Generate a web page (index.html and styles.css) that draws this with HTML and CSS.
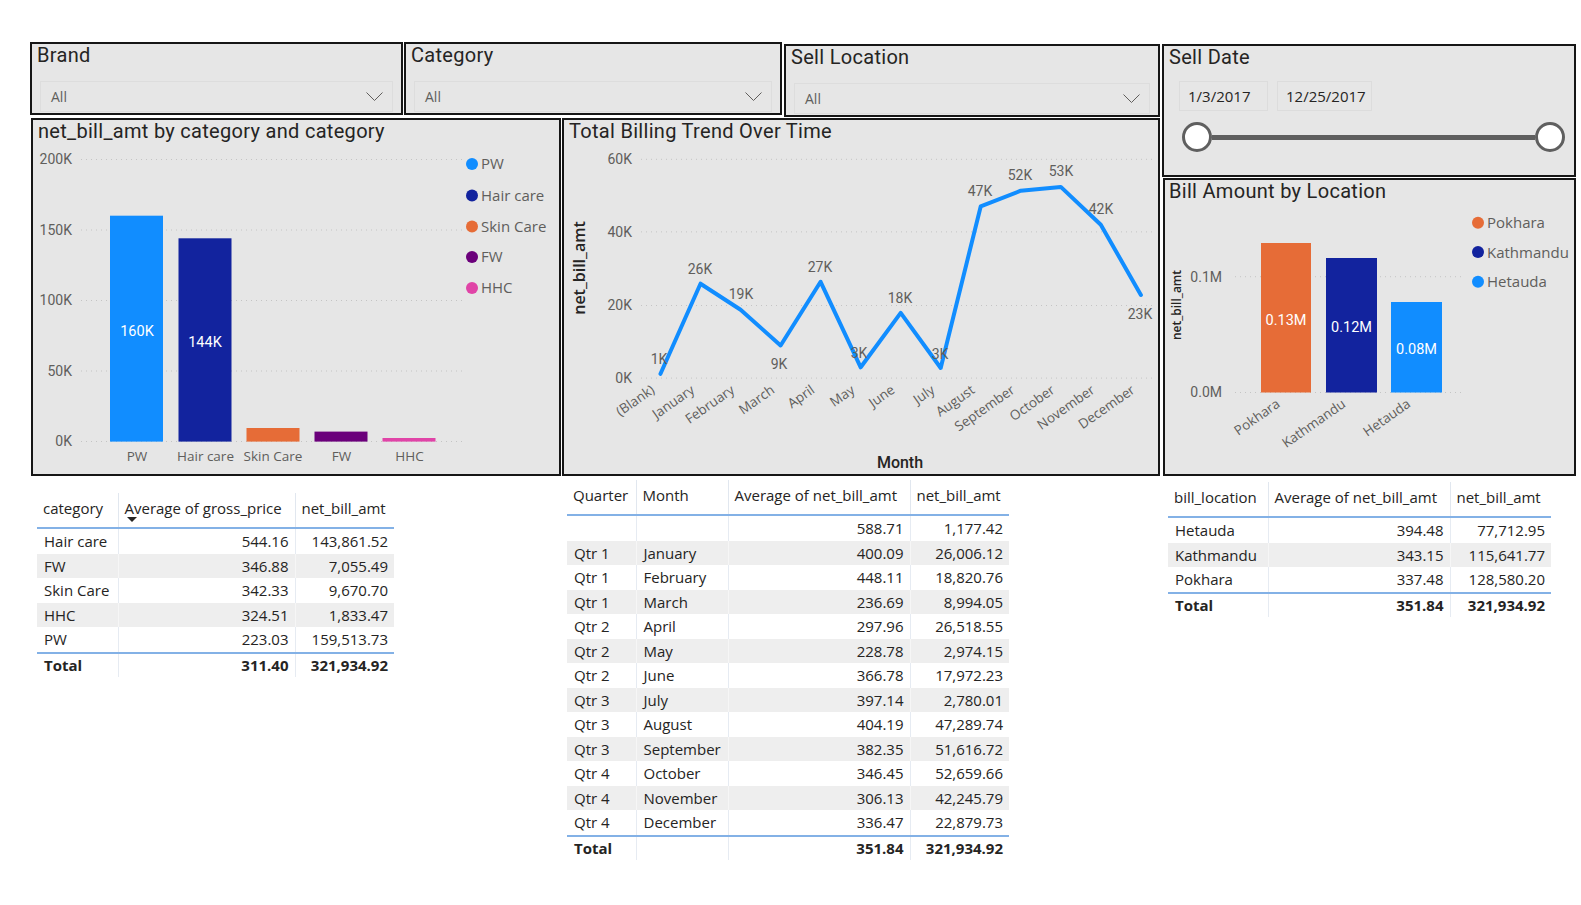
FILE: index.html
```html
<!DOCTYPE html>
<html>
<head>
<meta charset="utf-8">
<title>Billing Dashboard</title>
<link rel="stylesheet" href="styles.css">
</head>
<body>
<div class="board">
  <div class="main">
    <div class="slicers">
      <section class="panel slicer brand">
        <div class="ptitle">Brand</div>
        <div class="dropdown"><span>All</span><svg class="chev" width="17" height="9" viewBox="0 0 17 9"><polyline points="0.5,0.5 8.5,8.5 16.5,0.5"/></svg></div>
      </section>
      <section class="panel slicer category">
        <div class="ptitle">Category</div>
        <div class="dropdown"><span>All</span><svg class="chev" width="17" height="9" viewBox="0 0 17 9"><polyline points="0.5,0.5 8.5,8.5 16.5,0.5"/></svg></div>
      </section>
      <section class="panel slicer sell-location">
        <div class="ptitle">Sell Location</div>
        <div class="dropdown"><span>All</span><svg class="chev" width="17" height="9" viewBox="0 0 17 9"><polyline points="0.5,0.5 8.5,8.5 16.5,0.5"/></svg></div>
      </section>
    </div>
    <div class="charts">
      <section class="panel bar-panel">
        <div class="ptitle">net_bill_amt by category and category</div>
        <svg class="chart" width="526" height="332" viewBox="33 142 526 332">
          <g class="grid">
            <line x1="81" y1="159.5" x2="462" y2="159.5"/>
            <line x1="81" y1="230" x2="462" y2="230"/>
            <line x1="81" y1="300.5" x2="462" y2="300.5"/>
            <line x1="81" y1="371" x2="462" y2="371"/>
            <line x1="81" y1="441.5" x2="462" y2="441.5"/>
          </g>
          <g class="num" text-anchor="end">
            <text x="72" y="164">200K</text>
            <text x="72" y="234.5">150K</text>
            <text x="72" y="305">100K</text>
            <text x="72" y="375.5">50K</text>
            <text x="72" y="446">0K</text>
          </g>
          <rect x="110" y="215.7" width="53" height="225.9" fill="#118DFF"/>
          <rect x="178.5" y="238.3" width="53" height="203.3" fill="#12239E"/>
          <rect x="246.5" y="428" width="53" height="13.6" fill="#E66C37"/>
          <rect x="314.5" y="431.6" width="53" height="10" fill="#6B007B"/>
          <rect x="382.5" y="438" width="53" height="3.6" fill="#E044A7"/>
          <g class="inlabel" text-anchor="middle">
            <text x="137" y="336">160K</text>
            <text x="205" y="347">144K</text>
          </g>
          <g class="cat" text-anchor="middle">
            <text x="137" y="461">PW</text>
            <text x="205.5" y="461">Hair care</text>
            <text x="273" y="461">Skin Care</text>
            <text x="341.5" y="461">FW</text>
            <text x="409.5" y="461">HHC</text>
          </g>
          <g class="legend">
            <circle cx="472" cy="164" r="6" fill="#118DFF"/><text x="481" y="169">PW</text>
            <circle cx="472" cy="195.5" r="6" fill="#12239E"/><text x="481" y="200.5">Hair care</text>
            <circle cx="472" cy="226.5" r="6" fill="#E66C37"/><text x="481" y="231.5">Skin Care</text>
            <circle cx="472" cy="257" r="6" fill="#6B007B"/><text x="481" y="262">FW</text>
            <circle cx="472" cy="288" r="6" fill="#E044A7"/><text x="481" y="293">HHC</text>
          </g>
        </svg>
      </section>
      <section class="panel line-panel">
        <div class="ptitle">Total Billing Trend Over Time</div>
        <svg class="chart" width="594" height="332" viewBox="564 142 594 332">
          <g class="grid">
            <line x1="641" y1="159.3" x2="1156" y2="159.3"/>
            <line x1="641" y1="231.9" x2="1156" y2="231.9"/>
            <line x1="641" y1="305.5" x2="1156" y2="305.5"/>
            <line x1="641" y1="378.1" x2="1156" y2="378.1"/>
          </g>
          <g class="num" text-anchor="end">
            <text x="632" y="164">60K</text>
            <text x="632" y="236.5">40K</text>
            <text x="632" y="310">20K</text>
            <text x="632" y="382.5">0K</text>
          </g>
          <text class="axis-title" x="579" y="268" text-anchor="middle" transform="rotate(-90 579 268)" dy="0.35em">net_bill_amt</text>
          <polyline class="trend" points="660.5,373.8 700.5,283.7 740.6,309.8 780.6,345.5 820.6,281.8 860.7,367.3 900.7,312.9 940.7,368 980.7,206.4 1020.8,190.7 1060.8,186.9 1100.8,224.7 1140.9,295"/>
          <g class="num" text-anchor="middle">
            <text x="659" y="364">1K</text>
            <text x="700" y="274">26K</text>
            <text x="741" y="299">19K</text>
            <text x="779" y="369">9K</text>
            <text x="820" y="272">27K</text>
            <text x="859" y="358">3K</text>
            <text x="900" y="303">18K</text>
            <text x="940" y="359">3K</text>
            <text x="980" y="196">47K</text>
            <text x="1020" y="180">52K</text>
            <text x="1061" y="176">53K</text>
            <text x="1101" y="214">42K</text>
            <text x="1140" y="319">23K</text>
          </g>
          <g class="cat" text-anchor="end">
            <text x="655.5" y="392" transform="rotate(-35 655.5 392)">(Blank)</text>
            <text x="695.5" y="392" transform="rotate(-35 695.5 392)">January</text>
            <text x="735.6" y="392" transform="rotate(-35 735.6 392)">February</text>
            <text x="775.6" y="392" transform="rotate(-35 775.6 392)">March</text>
            <text x="815.6" y="392" transform="rotate(-35 815.6 392)">April</text>
            <text x="855.7" y="392" transform="rotate(-35 855.7 392)">May</text>
            <text x="895.7" y="392" transform="rotate(-35 895.7 392)">June</text>
            <text x="935.7" y="392" transform="rotate(-35 935.7 392)">July</text>
            <text x="975.7" y="392" transform="rotate(-35 975.7 392)">August</text>
            <text x="1015.8" y="392" transform="rotate(-35 1015.8 392)">September</text>
            <text x="1055.8" y="392" transform="rotate(-35 1055.8 392)">October</text>
            <text x="1095.8" y="392" transform="rotate(-35 1095.8 392)">November</text>
            <text x="1135.9" y="392" transform="rotate(-35 1135.9 392)">December</text>
          </g>
          <text class="axis-title month" x="900" y="468" text-anchor="middle">Month</text>
        </svg>
      </section>
    </div>
  </div>
  <div class="side">
    <section class="panel sell-date">
      <div class="ptitle">Sell Date</div>
      <div class="dates">
        <div class="datebox first">1/3/2017</div>
        <div class="datebox second">12/25/2017</div>
      </div>
      <div class="slider">
        <div class="knob"></div>
        <div class="track"></div>
        <div class="knob"></div>
      </div>
    </section>
    <section class="panel loc-panel">
      <div class="ptitle">Bill Amount by Location</div>
      <svg class="chart" width="409" height="272" viewBox="1165 202 409 272">
        <g class="grid">
          <line x1="1235" y1="276.7" x2="1465" y2="276.7"/>
          <line x1="1235" y1="392.5" x2="1465" y2="392.5"/>
        </g>
        <g class="num" text-anchor="end">
          <text x="1222" y="281.5">0.1M</text>
          <text x="1222" y="397.3">0.0M</text>
        </g>
        <text class="axis-title small" x="1177" y="305" text-anchor="middle" transform="rotate(-90 1177 305)" dy="0.35em">net_bill_amt</text>
        <rect x="1261" y="243" width="50" height="149.5" fill="#E66C37"/>
        <rect x="1326" y="258" width="51" height="134.5" fill="#12239E"/>
        <rect x="1391" y="302" width="51" height="90.5" fill="#118DFF"/>
        <g class="inlabel" text-anchor="middle">
          <text x="1286" y="325">0.13M</text>
          <text x="1351.5" y="332">0.12M</text>
          <text x="1416.5" y="354">0.08M</text>
        </g>
        <g class="cat" text-anchor="end">
          <text x="1281" y="406" transform="rotate(-35 1281 406)">Pokhara</text>
          <text x="1346.5" y="406" transform="rotate(-35 1346.5 406)">Kathmandu</text>
          <text x="1411.5" y="406" transform="rotate(-35 1411.5 406)">Hetauda</text>
        </g>
        <g class="legend">
          <circle cx="1478" cy="222.7" r="6" fill="#E66C37"/><text x="1487" y="228">Pokhara</text>
          <circle cx="1478" cy="252" r="6" fill="#12239E"/><text x="1487" y="257.5">Kathmandu</text>
          <circle cx="1478" cy="281.7" r="6" fill="#118DFF"/><text x="1487" y="287">Hetauda</text>
        </g>
      </svg>
    </section>
  </div>
</div>

<div class="tables">
  <table class="tbl tbl-category">
    <colgroup><col class="w81"><col class="w177"><col class="w99"></colgroup>
    <thead><tr><th>category</th><th class="sorted">Average of gross_price</th><th>net_bill_amt</th></tr></thead>
    <tbody>
      <tr><td>Hair care</td><td class="n">544.16</td><td class="n">143,861.52</td></tr>
      <tr class="alt"><td>FW</td><td class="n">346.88</td><td class="n">7,055.49</td></tr>
      <tr><td>Skin Care</td><td class="n">342.33</td><td class="n">9,670.70</td></tr>
      <tr class="alt"><td>HHC</td><td class="n">324.51</td><td class="n">1,833.47</td></tr>
      <tr><td>PW</td><td class="n">223.03</td><td class="n">159,513.73</td></tr>
      <tr class="total"><td>Total</td><td class="n">311.40</td><td class="n">321,934.92</td></tr>
    </tbody>
  </table>

  <table class="tbl tbl-month">
    <colgroup><col class="w69"><col class="w92"><col class="w182"><col class="w99"></colgroup>
    <thead><tr><th>Quarter</th><th>Month</th><th>Average of net_bill_amt</th><th>net_bill_amt</th></tr></thead>
    <tbody>
      <tr><td></td><td></td><td class="n">588.71</td><td class="n">1,177.42</td></tr>
      <tr class="alt"><td>Qtr 1</td><td>January</td><td class="n">400.09</td><td class="n">26,006.12</td></tr>
      <tr><td>Qtr 1</td><td>February</td><td class="n">448.11</td><td class="n">18,820.76</td></tr>
      <tr class="alt"><td>Qtr 1</td><td>March</td><td class="n">236.69</td><td class="n">8,994.05</td></tr>
      <tr><td>Qtr 2</td><td>April</td><td class="n">297.96</td><td class="n">26,518.55</td></tr>
      <tr class="alt"><td>Qtr 2</td><td>May</td><td class="n">228.78</td><td class="n">2,974.15</td></tr>
      <tr><td>Qtr 2</td><td>June</td><td class="n">366.78</td><td class="n">17,972.23</td></tr>
      <tr class="alt"><td>Qtr 3</td><td>July</td><td class="n">397.14</td><td class="n">2,780.01</td></tr>
      <tr><td>Qtr 3</td><td>August</td><td class="n">404.19</td><td class="n">47,289.74</td></tr>
      <tr class="alt"><td>Qtr 3</td><td>September</td><td class="n">382.35</td><td class="n">51,616.72</td></tr>
      <tr><td>Qtr 4</td><td>October</td><td class="n">346.45</td><td class="n">52,659.66</td></tr>
      <tr class="alt"><td>Qtr 4</td><td>November</td><td class="n">306.13</td><td class="n">42,245.79</td></tr>
      <tr><td>Qtr 4</td><td>December</td><td class="n">336.47</td><td class="n">22,879.73</td></tr>
      <tr class="total"><td>Total</td><td></td><td class="n">351.84</td><td class="n">321,934.92</td></tr>
    </tbody>
  </table>

  <table class="tbl tbl-location">
    <colgroup><col class="w100"><col class="w182"><col class="w101"></colgroup>
    <thead><tr><th>bill_location</th><th>Average of net_bill_amt</th><th>net_bill_amt</th></tr></thead>
    <tbody>
      <tr><td>Hetauda</td><td class="n">394.48</td><td class="n">77,712.95</td></tr>
      <tr class="alt"><td>Kathmandu</td><td class="n">343.15</td><td class="n">115,641.77</td></tr>
      <tr><td>Pokhara</td><td class="n">337.48</td><td class="n">128,580.20</td></tr>
      <tr class="total"><td>Total</td><td class="n">351.84</td><td class="n">321,934.92</td></tr>
    </tbody>
  </table>
</div>
</body>
</html>
```

FILE: styles.css
```css
html, body {
  margin: 0;
  padding: 0;
  background: #ffffff;
}

body {
  font-family: "Open Sans", "Noto Sans", sans-serif;
  color: #252423;
  width: 1581px;
  height: 905px;
  overflow: hidden;
}

.board {
  display: flex;
  align-items: flex-start;
  padding: 42px 0 0 30px;
}

.main {
  width: 1130px;
}

.slicers {
  display: flex;
  align-items: flex-start;
  height: 75px;
}

.panel {
  background: #e6e6e6;
  border: 2px solid #161616;
  box-sizing: border-box;
}

.ptitle {
  font-family: Roboto, "Liberation Sans", sans-serif;
  font-size: 20px;
  font-weight: 400;
  letter-spacing: 0.3px;
  line-height: 22px;
  height: 22px;
  color: #252423;
  padding-left: 5px;
  white-space: nowrap;
}

.slicer {
  height: 73px;
}

.brand { width: 373px; }
.category { width: 378px; margin-left: 1px; }
.sell-location { width: 376px; margin-left: 2px; margin-top: 2px; }

.dropdown {
  display: flex;
  align-items: center;
  justify-content: space-between;
  box-sizing: border-box;
  height: 31px;
  margin: 15px 8px 0;
  padding: 0 9px 0 10px;
  border: 1px solid #dddddd;
  font-size: 14px;
  color: #605e5c;
}

.chev polyline {
  fill: none;
  stroke: #605e5c;
  stroke-width: 1;
}

.charts {
  display: flex;
  margin-top: 1px;
}

.bar-panel {
  width: 530px;
  height: 358px;
  margin-left: 1px;
}

.line-panel {
  width: 598px;
  height: 358px;
  margin-left: 1px;
}

.chart {
  display: block;
  overflow: visible;
}

.grid line {
  stroke: #c4c4c4;
  stroke-width: 1;
  stroke-dasharray: 1 4;
}

.num {
  font-family: Roboto, "Liberation Sans", sans-serif;
  font-size: 14px;
  fill: #605e5c;
}

.cat {
  font-family: "Open Sans", sans-serif;
  font-size: 13.5px;
  fill: #605e5c;
}

.inlabel {
  font-family: Roboto, "Liberation Sans", sans-serif;
  font-size: 14.5px;
  fill: #ffffff;
}

.legend text {
  font-family: "Open Sans", sans-serif;
  font-size: 15px;
  fill: #605e5c;
}

.axis-title {
  font-family: "Open Sans", sans-serif;
  font-size: 16px;
  font-weight: 600;
  fill: #252423;
}

.axis-title.month {
  font-family: Roboto, sans-serif;
  font-size: 16px;
  font-weight: 500;
}

.axis-title.small {
  font-size: 12px;
}

.trend {
  fill: none;
  stroke: #118DFF;
  stroke-width: 4;
  stroke-linejoin: round;
  stroke-linecap: round;
}

.side {
  width: 414px;
  margin-left: 2px;
  margin-top: 2px;
}

.sell-date {
  height: 133px;
}

.dates {
  display: flex;
  gap: 9px;
  margin: 13px 0 0 15px;
}

.datebox {
  box-sizing: border-box;
  height: 30px;
  line-height: 28px;
  padding: 0 8px;
  border: 1px solid #dcdcdc;
  font-size: 15px;
  color: #252423;
}

.datebox.first { width: 89px; }
.datebox.second { width: 95px; }

.slider {
  display: flex;
  align-items: center;
  margin: 11px 9px 0 18px;
}

.knob {
  width: 30px;
  height: 30px;
  box-sizing: border-box;
  border: 3px solid #5f5f5f;
  border-radius: 50%;
  background: #ffffff;
  flex: none;
}

.track {
  flex: 1;
  height: 5px;
  background: #5f5f5f;
}

.loc-panel {
  width: 413px;
  height: 298px;
  margin-left: 1px;
  margin-top: 1px;
}

.loc-panel .ptitle {
  padding-left: 4px;
}

/* tables */
.tables {
  display: flex;
  align-items: flex-start;
  margin-top: 4px;
  padding-left: 37px;
}

.tbl {
  border-collapse: collapse;
  table-layout: fixed;
  font-family: "Open Sans", "Noto Sans", sans-serif;
  font-size: 15px;
  color: #252423;
  background: #ffffff;
}

.tbl-category { margin-top: 13px; width: 357px; }
.tbl-month { margin-left: 173px; width: 442px; }
.tbl-location { margin-left: 159px; margin-top: 2px; width: 383px; }

.w69 { width: 69px; }
.w81 { width: 81px; }
.w92 { width: 92px; }
.w99 { width: 99px; }
.w100 { width: 100px; }
.w101 { width: 101px; }
.w177 { width: 177px; }
.w182 { width: 182px; }

.tbl th {
  height: 30px;
  padding: 0 6px 4px 6px;
  font-weight: 400;
  text-align: left;
  white-space: nowrap;
  border-bottom: 2px solid #83b1e6;
  border-right: 1px solid #e1e7ef;
}

.tbl th:last-child,
.tbl td:last-child {
  border-right: none;
}

.tbl td {
  height: 24.5px;
  padding: 0 6px 0 7px;
  white-space: nowrap;
  overflow: hidden;
  border-right: 1px solid #e6ebf2;
}

.tbl td.n {
  text-align: right;
}

.tbl tr.alt td {
  background: #eeeeee;
  border-right-color: #f6f6f6;
}

.tbl tr.total td {
  font-weight: 700;
  border-top: 2px solid #83b1e6;
  height: 23px;
}

.sorted {
  position: relative;
}

.sorted::after {
  content: "";
  position: absolute;
  left: 8px;
  bottom: 5px;
  border-left: 5px solid transparent;
  border-right: 5px solid transparent;
  border-top: 5px solid #252423;
}
```
